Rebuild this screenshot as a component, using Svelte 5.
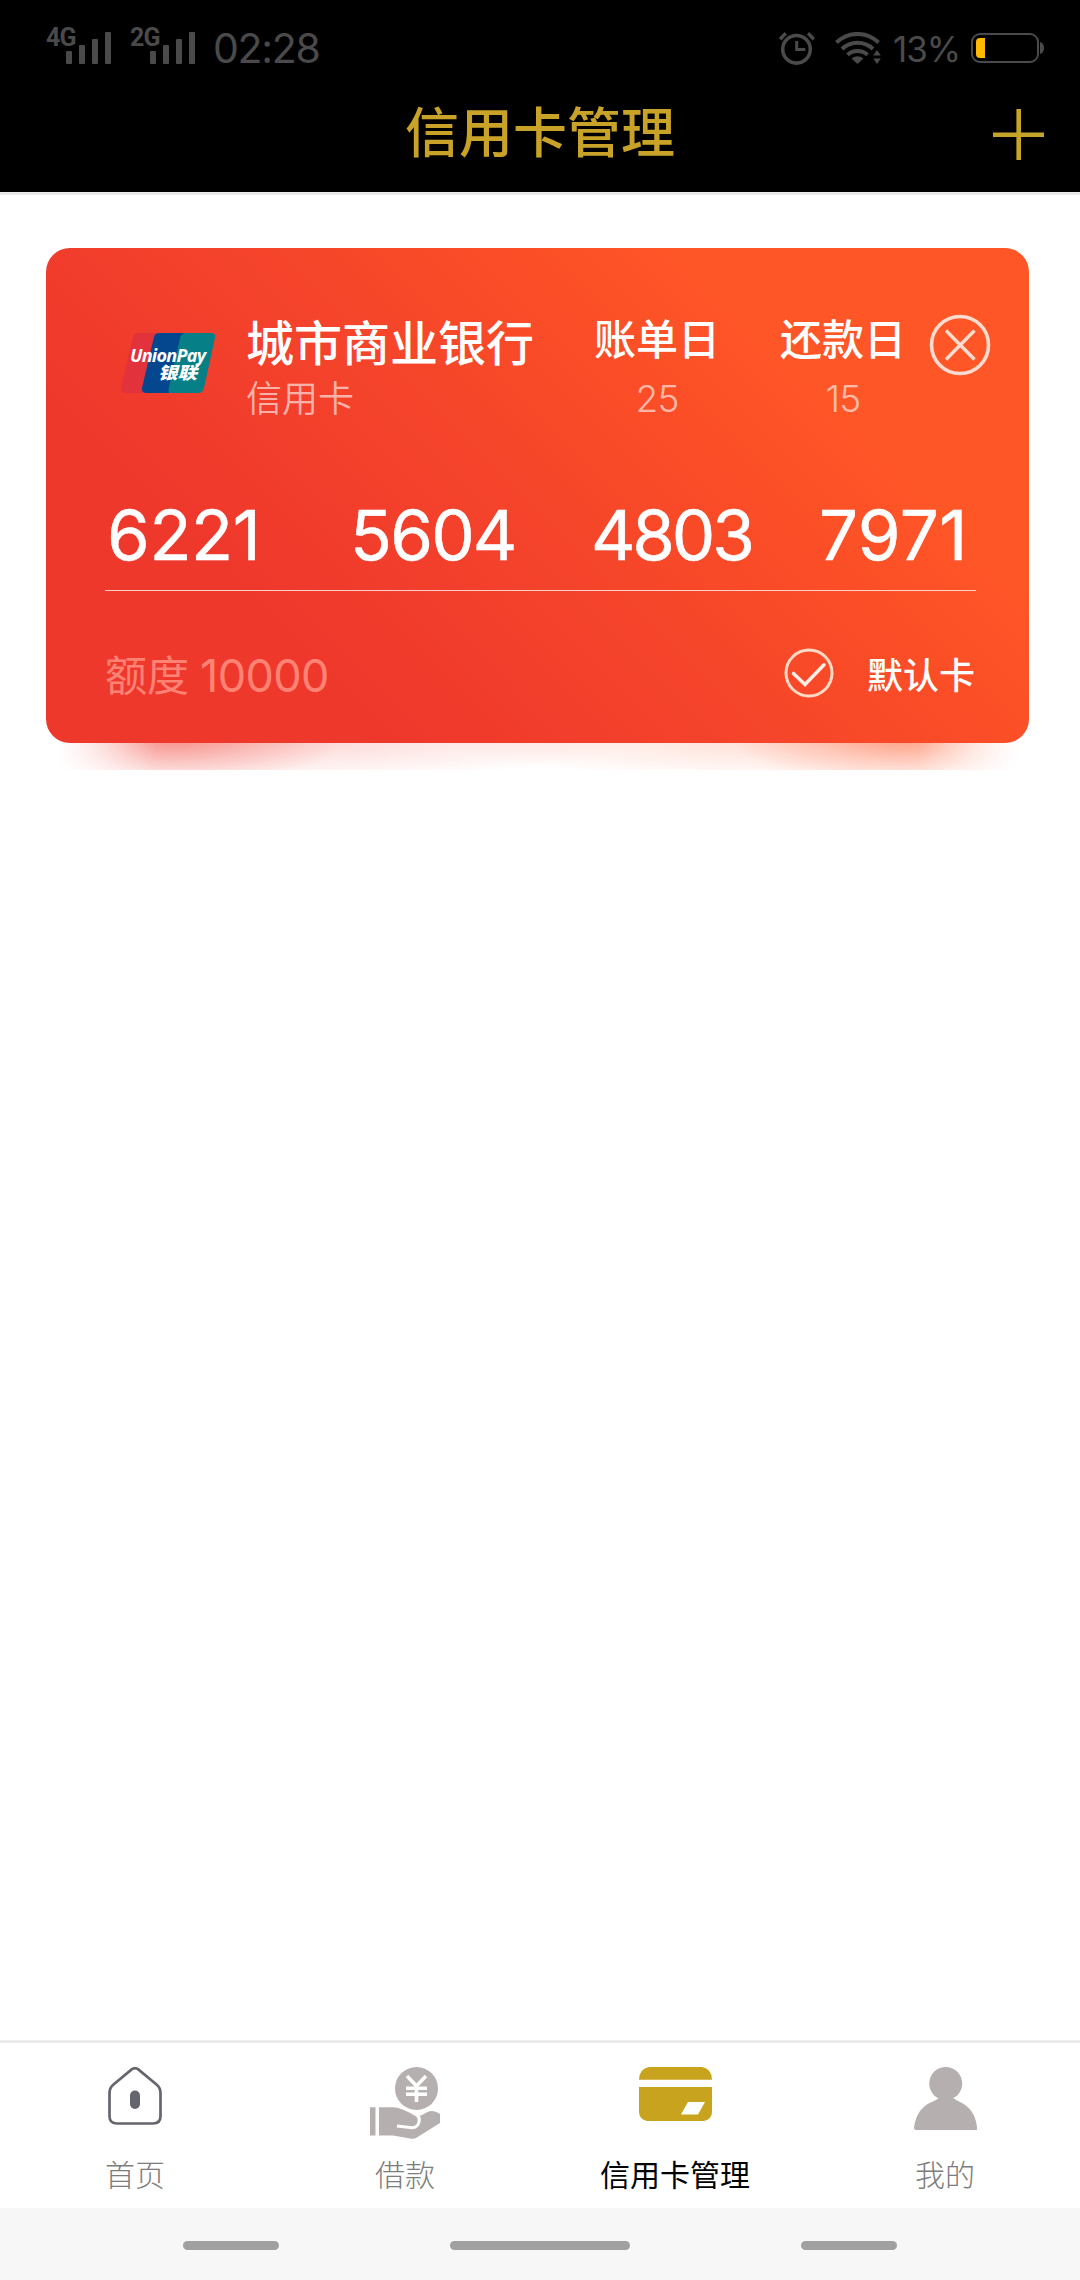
<script lang="ts">
	interface Tab {
		id: string;
		label: string;
	}

	const signals = ['4G', '2G'];
	// tracking evens out the narrow 1 against the wide 4, 8 and 0
	const groups = [
		{ digits: '6221', tracking: -0.4 },
		{ digits: '5604', tracking: -1.8 },
		{ digits: '4803', tracking: -3.2 },
		{ digits: '7971', tracking: 0.5 }
	];
	const dates = [
		{ label: '账单日', value: '25' },
		{ label: '还款日', value: '15' }
	];
	const tabs: Tab[] = [
		{ id: 'home', label: '首页' },
		{ id: 'loan', label: '借款' },
		{ id: 'card', label: '信用卡管理' },
		{ id: 'mine', label: '我的' }
	];

	let active = $state('card');
</script>

<div class="screen">
	<header>
		<div class="status">
			{#each signals as s (s)}
				<div class="signal">
					<span>{s}</span>
					<svg width="45" height="32" viewBox="0 0 45 32" fill="#4a4a4a">
						<rect x="0" y="19" width="6" height="13" rx="1" />
						<rect x="13" y="13" width="6" height="19" rx="1" />
						<rect x="26" y="7" width="6" height="25" rx="1" />
						<rect x="39" y="0" width="6" height="32" rx="1" />
					</svg>
				</div>
			{/each}
			<span class="time">02:28</span>
			<svg class="alarm" width="36" height="34" viewBox="0 0 36 34" fill="none" stroke="#4a4a4a">
				<circle cx="17.5" cy="17.3" r="13.8" stroke-width="3.6" />
				<path d="M17.7 9v8.4h8.6" stroke-width="3" />
				<path d="M1 7.2l5.8-5.9M29 1.3l5.8 5.9" stroke-width="3.4" />
			</svg>
			<svg class="wifi" width="46" height="34" viewBox="0 0 46 34" fill="none" stroke="#4a4a4a">
				<path d="M1.5 10.5a30 30 0 0 1 42 0" stroke-width="4" />
				<path d="M7 17a22.5 22.5 0 0 1 31 0" stroke-width="4" />
				<path d="M12.5 22.8a15 15 0 0 1 20 0" stroke-width="4" />
				<path d="M16.5 26.5q6-4.6 12 0l-6 5.6z" fill="#4a4a4a" stroke="none" />
				<path d="M42 18l3.8 5.6h-7.6zM42 32l3.8-5.6h-7.6z" fill="#4a4a4a" stroke="none" />
			</svg>
			<span class="percent">13%</span>
			<svg class="battery" width="73" height="30" viewBox="0 0 73 30">
				<rect x="1" y="1" width="66" height="28" rx="8" fill="none" stroke="#4a4a4a" stroke-width="2" />
				<path d="M69 9q4 1 4 6t-4 6z" fill="#4a4a4a" />
				<path d="M14 5v20H9q-4 0-4-4V9q0-4 4-4z" fill="#ffb900" />
			</svg>
		</div>
		<div class="titlebar">
			<h1>信用卡管理</h1>
			<button type="button" class="add" aria-label="添加">
				<svg width="51" height="51" viewBox="0 0 51 51" stroke="#c4a429" stroke-width="4.6">
					<path d="M25.7 0v51M0 25.7h51" />
				</svg>
			</button>
		</div>
	</header>

	<main>
		<section class="card">
			<div class="head">
				<svg class="logo" width="98" height="62" viewBox="0 0 98 62">
					<path d="M18 1h28L34 61H5q-5 0-4-5L13 5q1-4 5-4z" fill="#e2323c" />
					<path d="M39 1h34L61 61H27q-6 0-5-5L34 5q1-4 5-4z" fill="#04478f" />
					<path d="M65 1h26q5 0 4 5L84 56q-1 5-6 5H49q-1-3 0-6L60 6q1-4 5-5z" fill="#068086" />
					<text x="10" y="29.5" class="union" textLength="76">UnionPay</text>
					<text x="38" y="47" class="yinlian" textLength="39" lengthAdjust="spacingAndGlyphs">银联</text>
				</svg>
				<div class="bank">
					<h2>城市商业银行</h2>
					<p>信用卡</p>
				</div>
				<div class="dates">
					{#each dates as d (d.label)}
						<div class="date">
							<span class="label">{d.label}</span>
							<span class="value">{d.value}</span>
						</div>
					{/each}
				</div>
				<button type="button" class="close" aria-label="删除">
					<svg width="62" height="62" viewBox="0 0 62 62" fill="none" stroke="#ffdccf">
						<circle cx="31" cy="31" r="28.5" stroke-width="3.6" />
						<path d="M17 16.5l28.500 29M45.500 16.500l-28.500 29" stroke-width="3.4" />
					</svg>
				</button>
			</div>

			<div class="number">
				{#each groups as g (g.digits)}
					<span style="letter-spacing: {g.tracking}px">{g.digits}</span>
				{/each}
			</div>

			<div class="foot">
				<span class="quota">额度</span>
				<span class="amount">10000</span>
				<svg width="50" height="50" viewBox="0 0 50 50" fill="none">
					<circle cx="25" cy="25" r="23" stroke="#ffd9c4" stroke-width="3" />
					<path d="M9.5 25.5L21 36.5 40 16.8" stroke="#ffece2" stroke-width="3.6" stroke-linecap="round" />
				</svg>
				<span class="default">默认卡</span>
			</div>
		</section>
		<div class="glow"></div>
	</main>

	<nav>
		{#each tabs as t (t.id)}
			<button type="button" class="tab" class:active={active === t.id} onclick={() => (active = t.id)}>
				<span class="icon">
					{#if t.id === 'home'}
						<svg width="54" height="58" viewBox="0 0 54 58" fill="none">
							<path
								d="M24 2.2q3-2 6 0l18.500 15.300q4 3.300 4 8.500V49q0 7.500-7.500 7.500H9Q1.500 56.500 1.500 49V26q0-5.200 4-8.500z"
								stroke="#65656e"
								stroke-width="2.700"
							/>
							<rect x="22" y="23.500" width="10" height="18.500" rx="5" fill="#65656e" />
						</svg>
					{:else if t.id === 'loan'}
						<svg width="70" height="72" viewBox="0 0 70 72" fill="#b5b0af">
							<circle cx="46.500" cy="21.500" r="21.500" />
							<path
								d="M37 9l9.500 10L56 9M46.500 18v17M36 21.300h21M36 27.300h21"
								fill="none"
								stroke="#fff"
								stroke-width="3.600"
							/>
							<path d="M0 40.300h5.500v28.200H0zM9 40.300h13.500q5 0 10 2.200l10 4.500q5.500 2.200 9 1.300l6.500-3.500q5.500-2.500 12 2.200v9L46 71q-2.500 1.300-6 .500l-17-3H9z" />
							<path
								d="M42 45.500q9 3 7 9.500-1.500 6.500-9 5.500l-13-1.500"
								fill="none"
								stroke="#fff"
								stroke-width="3"
							/>
						</svg>
					{:else if t.id === 'card'}
						<svg width="73" height="54" viewBox="0 0 73 54" fill="#c8a41e">
							<path d="M10 0h53q10 2 10 12.700H0Q0 2 10 0zM0 20h73v25q0 7-8 9H8q-8-2-8-9z" />
							<path d="M49 35h17l-7 12.500H42z" fill="#fff" />
						</svg>
					{:else}
						<svg width="63" height="63" viewBox="0 0 63 63" fill="#b5b0af">
							<circle cx="31.700" cy="16.500" r="16.500" />
							<path d="M2 63q-2 0-2-3 3-20 20-26l5-3h14l5 3q17 7 19 26v3z" />
						</svg>
					{/if}
				</span>
				<span>{t.label}</span>
			</button>
		{/each}
	</nav>

	<div class="gestures">
		<i></i>
		<i class="wide"></i>
		<i></i>
	</div>
</div>

<style>
	:global(body) {
		background: #fff;
	}
	.screen {
		display: flex;
		flex-direction: column;
		width: 1080px;
		height: 2280px;
		overflow: hidden;
		background: #fff;
		font-family: 'Noto Sans CJK SC', sans-serif;
	}
	h1,
	h2,
	p {
		margin: 0;
		font-weight: 400;
	}
	button {
		padding: 0;
		border: 0;
		background: none;
		font: inherit;
		color: inherit;
	}
	svg {
		display: block;
		flex: none;
	}
	header {
		height: 192px;
		background: #000;
		border-bottom: 3px solid #eaeaea;
	}
	.status {
		display: flex;
		align-items: flex-start;
		height: 76px;
		padding: 0 36px 0 46px;
		box-sizing: border-box;
		color: #4a4a4a;
		font-family: Inter, sans-serif;
	}
	.signal {
		display: flex;
		width: 84px;
		padding-top: 28px;
	}
	.signal span {
		width: 20px;
		font: 700 25px/20px Roboto, sans-serif;
		letter-spacing: -0.8px;
	}
	.signal svg {
		margin-top: 4px;
	}
	.time {
		width: 112px;
		margin: 28px 0 0 -1px;
		font-size: 41px;
		line-height: 40px;
		letter-spacing: -1.3px;
	}
	.alarm {
		margin: 32px 0 0 454px;
	}
	.wifi {
		margin: 32px 0 0 20px;
	}
	.percent {
		width: 78px;
		margin: 29px 0 0 12px;
		font-size: 35px;
		line-height: 40px;
		letter-spacing: -1px;
	}
	.battery {
		margin-top: 33px;
	}
	.titlebar {
		display: grid;
		grid-template-columns: 1fr auto 1fr;
		align-items: center;
		height: 107px;
		padding-right: 36px;
	}
	h1 {
		grid-column: 2;
		margin-left: 36px;
		font-size: 54px;
		font-weight: 500;
		line-height: 80px;
		color: #c9a328;
	}
	.add {
		justify-self: end;
		margin-top: 9px;
	}
	main {
		flex: 1;
		padding: 53px 51px 0 46px;
	}
	.card {
		height: 495px;
		padding: 64px 38px 0 59px;
		box-sizing: border-box;
		border-radius: 24px;
		background: linear-gradient(45deg, #ef382c 24%, #f4432b 46%, #fa4c27 62%, #ff5627 77%);
		color: #fff;
	}
	.head {
		display: flex;
		height: 110px;
	}
	.logo {
		margin: 20px 28px 0 15px;
	}
	.union {
		font: italic 700 18px 'Open Sans', sans-serif;
		fill: #fff;
	}
	.yinlian {
		font: italic 900 17px 'Noto Sans CJK SC', sans-serif;
		fill: #fff;
	}
	.bank {
		width: 336px;
	}
	h2 {
		font-size: 48px;
		font-weight: 500;
		line-height: 56px;
	}
	.bank p {
		margin-top: 6px;
		font-size: 36px;
		line-height: 44px;
		color: rgba(255, 255, 255, 0.6);
		font-weight: 350;
	}
	.dates {
		display: flex;
		gap: 36px;
	}
	.date {
		display: flex;
		flex-direction: column;
		align-items: center;
		width: 150px;
	}
	.label {
		font-size: 42px;
		line-height: 50px;
		font-weight: 500;
	}
	.value {
		margin-top: 15px;
		font: 300 37px/44px Inter, sans-serif;
		letter-spacing: -0.8px;
		color: rgba(255, 255, 255, 0.62);
	}
	.close {
		align-self: flex-start;
		margin: 2px 0 0 11px;
	}
	.number {
		display: grid;
		grid-template-columns: 243px 241px 228px auto;
		margin-top: 73px;
		margin-right: 15px;
		padding: 0 0 15px 2px;
		border-bottom: 1px solid rgba(255, 255, 255, 0.75);
		font: 400 69px/80px Inter, sans-serif;
		-webkit-text-stroke: 0.5px #fff;
	}
	.foot {
		display: flex;
		height: 151px;
		margin-right: 16px;
		padding-top: 57px;
		box-sizing: border-box;
		line-height: 50px;
	}
	.quota {
		font-size: 42px;
		color: #ff8375;
	}
	.amount {
		margin: 3px 0 0 11px;
		font: 400 45px/50px Inter, sans-serif;
		letter-spacing: -0.6px;
		color: #ff8375;
	}
	.foot svg {
		margin-left: auto;
	}
	.default {
		margin-left: 33px;
		font-size: 36px;
		font-weight: 500;
	}
	/* coloured light spilling out below the card */
	.glow {
		height: 27px;
		background:
			radial-gradient(ellipse 170px 48px at 125px -4px, rgba(240, 56, 44, 0.45), rgba(240, 56, 44, 0.2) 50%, rgba(240, 56, 44, 0)),
			radial-gradient(ellipse 170px 48px at 858px -4px, rgba(255, 86, 39, 0.45), rgba(255, 86, 39, 0.2) 50%, rgba(255, 86, 39, 0)),
			radial-gradient(ellipse 380px 42px at 210px -4px, rgba(240, 56, 44, 0.22), rgba(240, 56, 44, 0)),
			radial-gradient(ellipse 380px 42px at 773px -4px, rgba(255, 86, 39, 0.22), rgba(255, 86, 39, 0));
		mask-image: linear-gradient(90deg, transparent 10px, #000 110px, #000 873px, transparent 973px);
	}
	nav {
		display: grid;
		grid-template-columns: repeat(4, 1fr);
		height: 165px;
		border-top: 3px solid #ebebeb;
	}
	.tab {
		display: flex;
		flex-direction: column;
		align-items: center;
		padding-top: 24px;
		font-size: 30px;
		line-height: 40px;
		color: #7d7d7d;
		font-weight: 300;
	}
	.tab.active {
		color: #000;
		font-weight: 400;
	}
	.icon {
		height: 86px;
	}
	.gestures {
		display: flex;
		justify-content: space-between;
		height: 72px;
		padding: 33px 183px 0;
		box-sizing: border-box;
		background: #f7f7f7;
	}
	.gestures i {
		width: 96px;
		height: 9px;
		border-radius: 5px;
		background: #a0a0a0;
	}
	.gestures .wide {
		width: 180px;
	}
</style>
